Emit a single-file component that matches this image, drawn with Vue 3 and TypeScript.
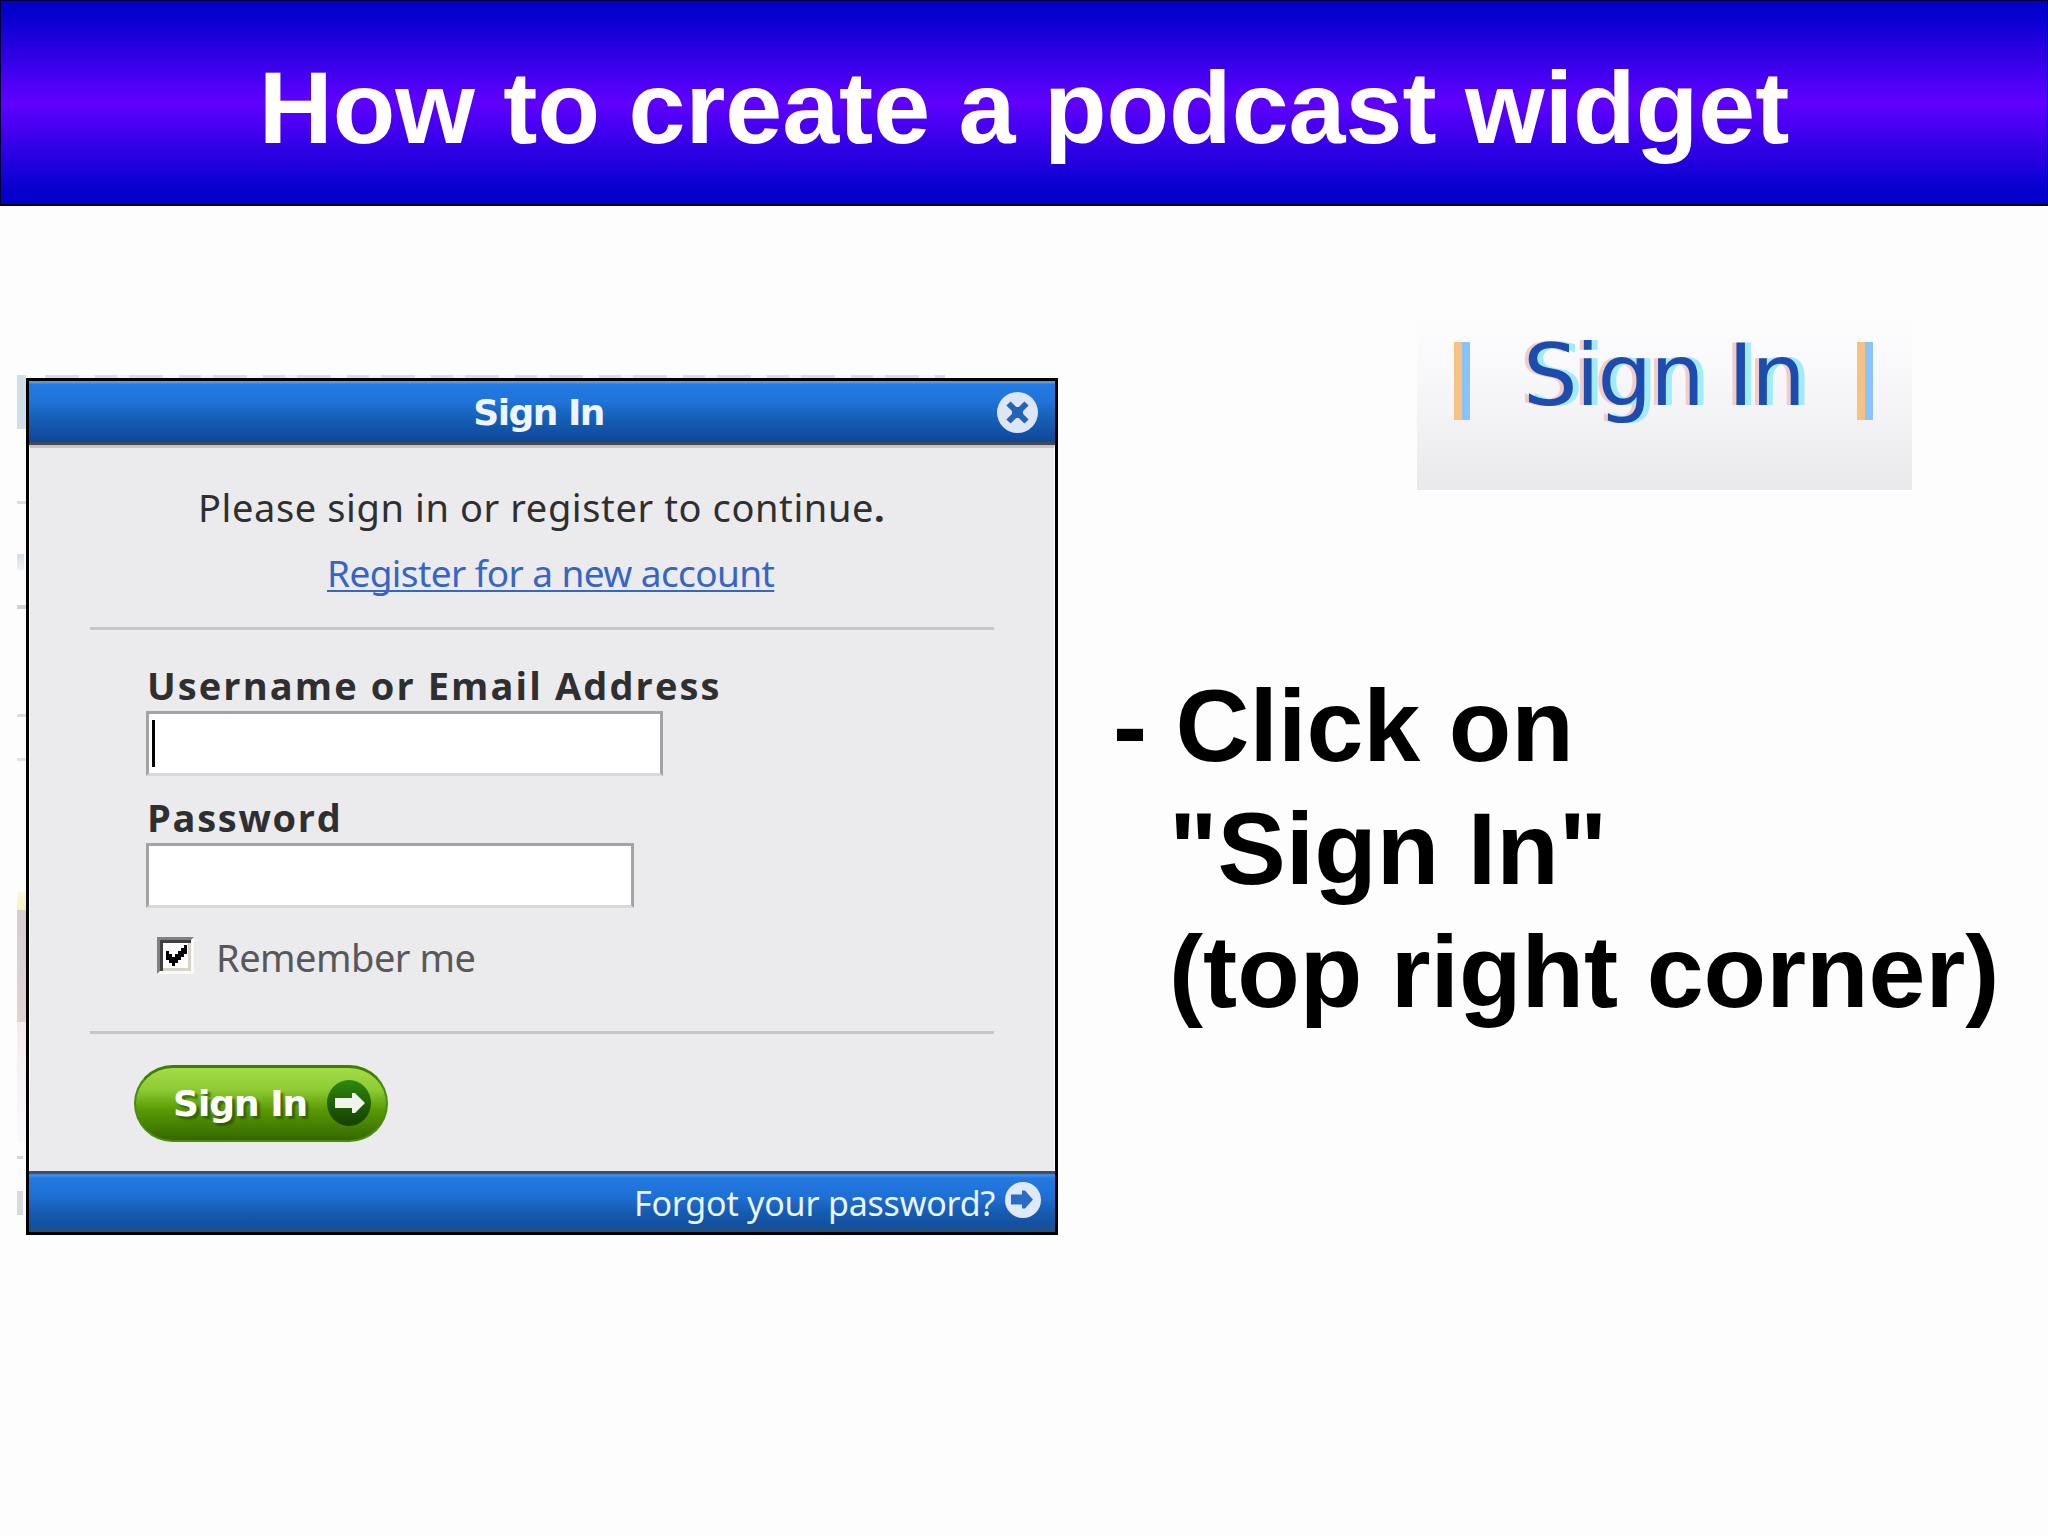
<script setup lang="ts">
/**
 * Podcast widget tutorial slide: sign-in dialog on the left,
 * link close-up and instruction on the right.
 */
import { ref } from "vue";

const username = ref("");
const password = ref("");
const remember = ref(true);

const steps = ["- Click on", '"Sign In"', "(top right corner)"];
</script>

<template>
  <div class="slide">
    <header class="slide-header">
      <h1 class="slide-title">How to create a podcast widget</h1>
    </header>

    <main class="slide-main">
      <section class="dialog-area">
        <div class="dialog" role="dialog">
          <header class="dialog-header">
            <h2 class="dialog-title">Sign In</h2>
            <svg class="close-icon" viewBox="0 0 41 41">
              <circle cx="20.5" cy="20.5" r="20.5" fill="#dce6f6" />
              <path d="M11.500 11.500L29.500 29.500M29.500 11.500L11.500 29.500" stroke="#2563b4" stroke-width="6" />
              <path d="M15 15h11v11h-11z" fill="#2563b4" />
            </svg>
          </header>

          <form class="dialog-body" @submit.prevent>
            <p class="message"><span>Please sign in or register to continue</span><b>.</b></p>
            <a class="register">Register for a new account</a>
            <hr class="rule rule-top" />

            <label class="field-label label-user" for="username">Username or Email Address</label>
            <div class="input-wrap">
              <input id="username" v-model="username" class="input input-user" type="text" />
              <span class="caret" />
            </div>
            <label class="field-label label-pass" for="password">Password</label>
            <input id="password" v-model="password" class="input input-pass" type="password" />

            <div class="remember" @click="remember = !remember">
              <span class="checkbox">
                <svg v-if="remember" class="check" viewBox="0 0 7 7" shape-rendering="crispEdges">
                  <path d="M6 0h1v3h-1v1h-1v1h-1v1h-1v1h-1v-1h-1v-1h-1v-3h1v1h1v1h1v-1h1v-1h1v-1h1z" fill="#000" />
                </svg>
              </span>
              <span class="remember-text">Remember me</span>
            </div>
            <hr class="rule rule-bottom" />

            <button type="submit" class="submit">
              <span class="submit-text">Sign In</span>
              <svg class="submit-icon" viewBox="0 0 44 46">
                <defs>
                  <linearGradient id="disc" x1="0" y1="0" x2="0" y2="1">
                    <stop offset="0" stop-color="#2f8a10" />
                    <stop offset="0.6" stop-color="#1d5a04" />
                    <stop offset="1" stop-color="#163f00" />
                  </linearGradient>
                </defs>
                <ellipse cx="22" cy="23" rx="22" ry="23" fill="url(#disc)" />
                <path d="M8 18h17v-5h3l10 10-10 10h-3v-5h-17z" fill="#f0f3ec" />
              </svg>
            </button>
          </form>

          <footer class="dialog-footer">
            <a class="forgot">Forgot your password?</a>
            <svg class="forgot-icon" viewBox="0 0 36 36">
              <circle cx="18" cy="18" r="18" fill="#dfe9f8" />
              <path d="M6 12.500h11v-4h3l8 9-8 9h-3v-4h-11z" fill="#2a6cc4" />
            </svg>
          </footer>
        </div>
      </section>

      <section class="notes">
        <div class="closeup">
          <span class="bar" />
          <span class="closeup-text">Sign In</span>
          <span class="bar" />
        </div>
        <p class="steps">
          <span v-for="step in steps" :key="step" class="step">{{ step }}</span>
        </p>
      </section>
    </main>
  </div>
</template>

<style>
body {
  margin: 0;
  background: #fdfdfd;
}
</style>

<style scoped>
.slide {
  width: 2048px;
  height: 1536px;
  overflow: hidden;
  background: #fdfdfd;
  font-family: "Liberation Sans", Arial, sans-serif;
}

.slide-header {
  box-sizing: border-box;
  height: 206px;
  padding-top: 47px;
  border: 1px solid #000030;
  border-bottom: 2px solid #000018;
  background: linear-gradient(#0000c8, #0800d0 8%, #6000ff 50%, #0800d0 92%, #0000c8);
}

.slide-title {
  margin: 0;
  font-size: 102.4px;
  line-height: 120px;
  font-weight: bold;
  text-align: center;
  white-space: nowrap;
  color: #fff;
}

.slide-main {
  display: flex;
}

/* strip of the page that shows behind the dialog */
.dialog-area {
  flex: none;
  width: 1033px;
  height: 860px;
  margin: 169px 0 0 17px;
  padding: 3px 0 0 9px;
  background:
    linear-gradient(#d3dfe8, #d3dfe8) 0 0 / 9px 54px no-repeat,
    linear-gradient(#dcdce2, #dcdce2) 0 126px / 9px 3px no-repeat,
    linear-gradient(#d4dce4, #eef3f6) 0 179px / 7px 16px no-repeat,
    linear-gradient(#d3d0d6, #d3d0d6) 0 230px / 9px 4px no-repeat,
    linear-gradient(#dcdce2, #dcdce2) 0 339px / 9px 3px no-repeat,
    linear-gradient(#e2e2e6, #e2e2e6) 0 383px / 9px 3px no-repeat,
    linear-gradient(#fbf8d6, #f6f1c0) 0 517px / 9px 18px no-repeat,
    linear-gradient(#d4cfcf, #dcd0d2 60%, #e2d2d2) 0 535px / 9px 112px no-repeat,
    linear-gradient(#f3ecef, #fbf9fc) 0 647px / 9px 120px no-repeat,
    linear-gradient(#d8d8dc, #d8d8dc) 0 781px / 6px 3px no-repeat,
    linear-gradient(#d6dcdc, #d6dcdc) 0 816px / 6px 24px no-repeat,
    repeating-linear-gradient(90deg, #dcdce2 0 34px, #f6f6f8 34px 50px, #dcdce2 50px 72px, #f2f2f5 72px 84px) 28px 0 / 900px 3px no-repeat;
}

.dialog {
  box-sizing: border-box;
  display: flex;
  flex-direction: column;
  width: 1032px;
  height: 857px;
  border: 3px solid #000;
  background: #ebebed;
  font-family: "Noto Sans", "Open Sans", sans-serif;
}

.dialog-header {
  box-sizing: border-box;
  display: flex;
  align-items: flex-start;
  justify-content: flex-end;
  height: 64px;
  padding: 11px 17px 0 0;
  border-bottom: 3px solid #454c54;
  background: linear-gradient(#5a96dc 0 2px, #2379e2 3px, #2075dc 30%, #1660b8 60%, #0f4796);
}

.dialog-title {
  margin: 3px 393px 0 0;
  font-family: "DejaVu Sans", Verdana, sans-serif;
  font-size: 36px;
  line-height: 36px;
  font-weight: 700;
  letter-spacing: -1.5px;
  white-space: nowrap;
  color: #eef5ff;
}

.close-icon {
  width: 41px;
  height: 41px;
}

.dialog-body {
  flex: 1;
  display: flex;
  flex-direction: column;
  align-items: flex-start;
  padding: 39px 0 0 117px;
  border-top: 3px solid #c3c6cc;
  border-left: 1px solid #fff;
  border-right: 1px solid #fff;
}

.message {
  margin: 0 0 0 51px;
  font-size: 38px;
  line-height: 40px;
  letter-spacing: 0.6px;
  white-space: nowrap;
  color: #2f2f31;
}

.register {
  margin: 26px 0 0 180px;
  font-size: 37px;
  line-height: 39px;
  letter-spacing: -0.6px;
  white-space: nowrap;
  color: #3565c6;
  text-decoration: underline;
  text-decoration-thickness: 2px;
  text-underline-offset: 3px;
  text-decoration-skip-ink: none;
}

.rule {
  flex: none;
  width: 904px;
  height: 3px;
  border: 0;
  background: #c6c6c8;
}

.rule-top {
  margin: 35px 0 0 -57px;
}

.field-label {
  font-family: "Open Sans", "Noto Sans", sans-serif;
  font-size: 38px;
  line-height: 40px;
  font-weight: 700;
  white-space: nowrap;
  color: #2f2f32;
}

.label-user {
  margin-top: 35px;
  letter-spacing: 2.1px;
}

.label-pass {
  margin-top: 21px;
  letter-spacing: 1.7px;
}

.input-wrap {
  position: relative;
  height: 65px;
  margin-top: 6px;
}

.input {
  box-sizing: border-box;
  display: block;
  height: 65px;
  margin: 0 0 0 -1px;
  padding: 0 8px;
  border: 3px solid #a3a3a6;
  border-bottom-color: #d8d8da;
  border-radius: 0;
  outline: none;
  background: #fff;
  font-size: 38px;
}

.input-user {
  width: 517px;
}

.input-pass {
  width: 488px;
  margin-top: 6px;
}

.caret {
  position: absolute;
  left: 5px;
  top: 9px;
  width: 3px;
  height: 47px;
  background: #000;
}

.remember {
  display: flex;
  height: 37px;
  margin: 29px 0 0 10px;
}

.checkbox {
  box-sizing: border-box;
  width: 37px;
  height: 37px;
  padding: 5px 0 0 6px;
  border: 3px solid;
  border-color: #808080 #fbfaf4 #fbfaf4 #808080;
  box-shadow: inset 3px 3px #404040, inset -3px -3px #d6d3ca;
  background: #fff;
}

.check {
  display: block;
  width: 21px;
  height: 21px;
}

.remember-text {
  margin-left: 22px;
  font-size: 38px;
  line-height: 41px;
  letter-spacing: -0.5px;
  white-space: nowrap;
  color: #58585a;
}

.rule-bottom {
  margin: 57px 0 0 -57px;
}

.submit {
  box-sizing: border-box;
  display: flex;
  align-items: center;
  width: 254px;
  height: 77px;
  margin: 31px 0 0 -13px;
  padding: 0 15px 2px 37px;
  justify-content: space-between;
  border: 2px solid #4a8c10;
  border-top: 3px solid #3f7d08;
  border-radius: 39px;
  background: linear-gradient(#a2dc48, #8ecb34 30%, #5a9a04 58%, #346800);
}

.submit-text {
  margin-top: 2px;
  font-family: "DejaVu Sans", Verdana, sans-serif;
  font-size: 36px;
  line-height: 40px;
  font-weight: 700;
  letter-spacing: -1px;
  white-space: nowrap;
  color: #fff;
  text-shadow: 3px 3px 2px rgba(30, 70, 0, 0.6);
}

.submit-icon {
  width: 44px;
  height: 46px;
}

.dialog-footer {
  box-sizing: border-box;
  display: flex;
  justify-content: flex-end;
  height: 61px;
  padding: 8px 14px 0 0;
  border-top: 3px solid #454c5c;
  background: linear-gradient(#3c8ae6 0 2px, #2379e0 4px, #1e6fd4 40%, #165cb2 65%, #13509f 88%, #24507e);
}

.forgot {
  margin: 3px 10px 0 0;
  font-size: 34px;
  line-height: 36px;
  letter-spacing: -0.2px;
  white-space: nowrap;
  color: #eaf4ff;
}

.forgot-icon {
  width: 36px;
  height: 36px;
}

.notes {
  width: 936px;
  padding-top: 106px;
  margin-left: 53px;
}

.closeup {
  box-sizing: border-box;
  display: flex;
  align-items: flex-start;
  justify-content: space-between;
  width: 495px;
  height: 178px;
  margin-left: 305px;
  padding: 30px 39px 0 37px;
  background: linear-gradient(#fdfdfd, #f9f8fb 30%, #f3f2f5 60%, #e9e8eb);
}

.bar {
  width: 16px;
  height: 78px;
  background: linear-gradient(90deg, #f6c284 50%, #8ac2fa 50%);
}

.closeup-text {
  margin-top: -12px;
  font-family: "DejaVu Sans", Verdana, sans-serif;
  font-size: 86px;
  line-height: 90px;
  letter-spacing: -2px;
  white-space: nowrap;
  color: #1e4cae;
  text-shadow: 6px 0 #a0ecfa, -4px 0 #f2cdc8;
}

.steps {
  display: flex;
  flex-direction: column;
  margin: 174px 0 0;
  font-size: 102.4px;
  line-height: 123px;
  font-weight: bold;
  white-space: nowrap;
  color: #000;
}

.step {
  padding-left: 1px;
}

.step + .step {
  padding-left: 57px;
}
</style>
